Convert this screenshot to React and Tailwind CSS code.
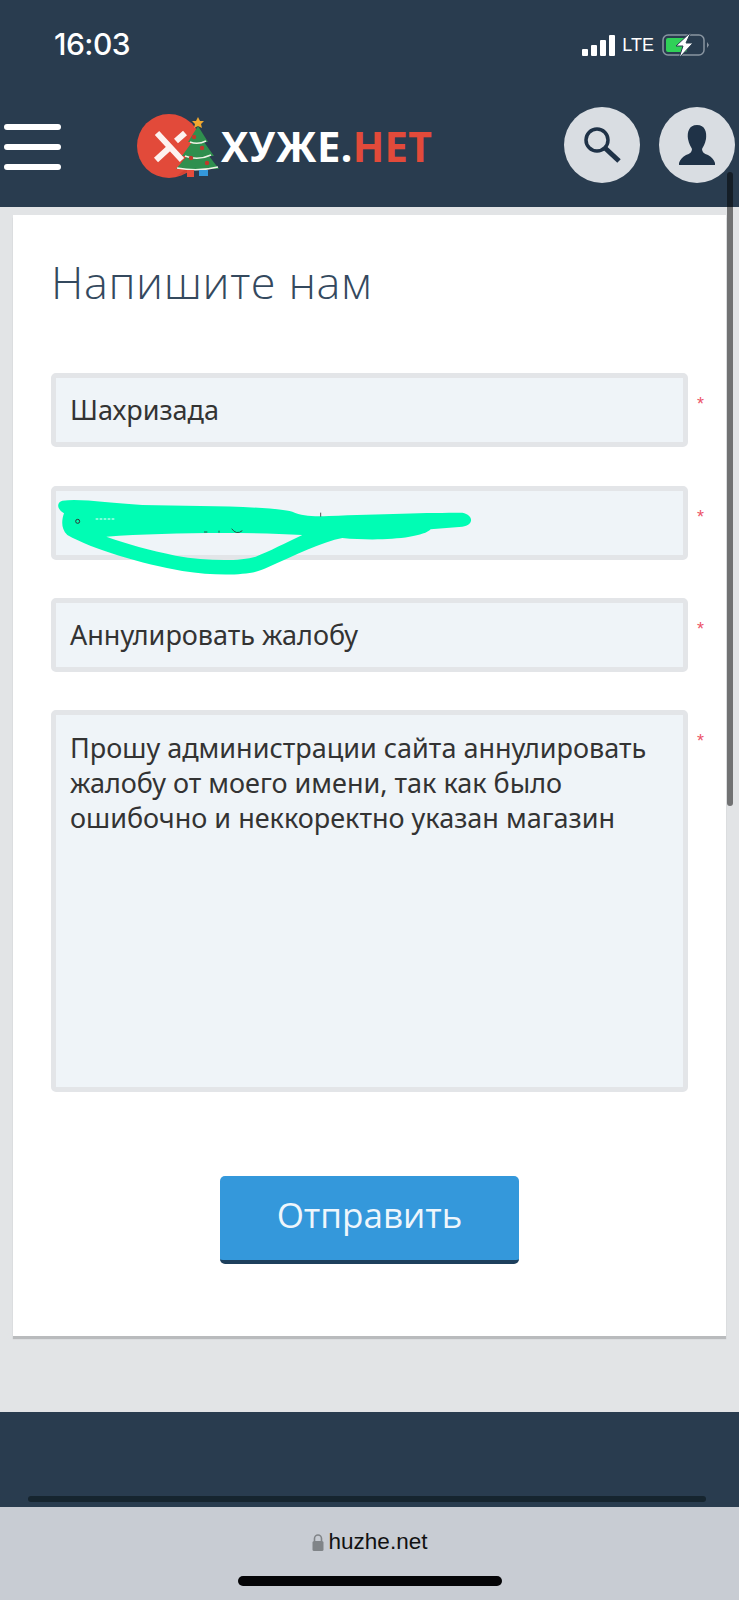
import React from 'react';

const fieldClass =
  'w-[637px] rounded-[5px] border-[5px] border-[#e3e5e8] bg-[#eff4f8] px-[14px] text-[27px] text-[#333] font-["Noto_Sans",sans-serif]';

function Required({ children, className = '' }) {
  return (
    <div className={`flex items-start ${className}`}>
      {children}
      <span className='ml-[9px] mt-[19px] text-[18px] leading-[24px] text-[#ec5468] font-["Liberation_Sans",sans-serif]'>*</span>
    </div>
  );
}

function StatusBar() {
  return (
    <div className="flex h-[88px] items-start justify-between pl-[54px] pr-[29px] pt-[26px] text-white">
      <span className='text-[30px] font-medium leading-[36px] font-["Inter",sans-serif] tracking-[-0.5px]'>16:03</span>
      <div className="flex items-center pt-[6px]">
        <svg width="33" height="21" viewBox="0 0 33 21" fill="#fff">
          <rect x="0" y="14" width="6" height="7" rx="1" />
          <rect x="9" y="10" width="6" height="11" rx="1" />
          <rect x="18" y="5" width="6" height="16" rx="1" />
          <rect x="27" y="0" width="6" height="21" rx="1" />
        </svg>
        <span className='ml-[7px] text-[18px] leading-[24px] font-["Liberation_Sans",sans-serif]'>LTE</span>
        <svg width="48" height="26" viewBox="0 0 48 26" className="ml-[8px]">
          <rect x="1" y="3" width="41" height="20" rx="5" fill="none" stroke="#8995a1" strokeWidth="1.5" />
          <rect x="4" y="6" width="21" height="14" rx="2" fill="#30d158" />
          <path d="M45 10 L47 13 L45 16 Z" fill="#8995a1" />
          <path d="M29 0 L14 14 L21 14 L17 26 L31 11 L24 11 Z" fill="#fff" stroke="#293c4f" strokeWidth="1" />
        </svg>
      </div>
    </div>
  );
}

function Logo() {
  return (
    <div className="flex items-center">
      <svg width="84" height="64" viewBox="0 0 84 64" className="shrink-0">
        <circle cx="32" cy="32" r="32" fill="#e24a3a" />
        <path d="M36 40 L50 54 L40 62 A32 32 0 0 0 60 48 Z" fill="#c9402f" opacity="0.6" />
        <path d="M20 19 L45 46 M19 46 L31 35 M39 27 L48 19" stroke="#fdf2f0" strokeWidth="6" fill="none" />
        <path d="M61 12 L51 28 L55 28 L45 42 L50 42 L39 55 L82 55 L72 42 L77 42 L67 28 L71 28 Z" fill="#2f8f4e" />
        <path d="M48 42 Q61 47 74 41 M53 28 Q61 31 69 27 M40 54 Q61 58 81 53" stroke="#eef3e6" strokeWidth="1.6" fill="none" />
        <path d="M61 3 L63 7 L67 7 L64 10 L65 14 L61 12 L57 14 L58 10 L55 7 L59 7 Z" fill="#f0a830" />
        <circle cx="54" cy="44" r="2.2" fill="#c0392b" />
        <circle cx="65" cy="34" r="2.2" fill="#c0392b" />
        <circle cx="57" cy="23" r="2.2" fill="#c0392b" />
        <circle cx="70" cy="49" r="2.2" fill="#c0392b" />
        <rect x="50" y="56" width="7" height="7" fill="#e74c3c" />
        <rect x="62" y="56" width="9" height="6" fill="#3498db" />
      </svg>
      <span className='text-[41px] font-bold leading-none tracking-[0.5px] text-white font-["Noto_Sans",sans-serif]'>
        ХУЖЕ.<span className="text-[#e24a3a]">НЕТ</span>
      </span>
    </div>
  );
}

function RoundButton({ children }) {
  return (
    <div className="flex h-[76px] w-[76px] items-center justify-center rounded-full bg-[#d9dde2]">{children}</div>
  );
}

function NavBar() {
  return (
    <div className="flex h-[119px] items-start pt-[19px]">
      <div className="ml-[4px] mt-[17px] flex w-[57px] flex-col gap-[14px]">
        <div className="h-[6px] rounded-full bg-white" />
        <div className="h-[6px] rounded-full bg-white" />
        <div className="h-[6px] rounded-full bg-white" />
      </div>
      <div className="ml-[76px] mt-[7px]">
        <Logo />
      </div>
      <div className="ml-auto mr-[4px] flex gap-[19px]">
        <RoundButton>
          <svg width="40" height="40" viewBox="0 0 40 40" fill="none" stroke="#1f3247">
            <circle cx="15" cy="15" r="11" strokeWidth="3.5" />
            <path d="M23 23 L37 36" strokeWidth="5" />
          </svg>
        </RoundButton>
        <RoundButton>
          <svg width="36" height="40" viewBox="0 0 36 40" fill="#1f3247">
            <path d="M18 0 C26 0 28 7 27 14 C26 19 24 22 23 24 C23 27 25 29 29 30 C33 32 35 35 36 38 L36 40 L0 40 L0 38 C1 35 3 32 7 30 C11 29 13 27 13 24 C12 22 10 19 9 14 C8 7 10 0 18 0 Z" />
          </svg>
        </RoundButton>
      </div>
    </div>
  );
}

function Scribble() {
  return (
    <svg width="480" height="120" viewBox="0 0 1440 360" className="pointer-events-none absolute left-[-27px] top-[-21px]">
      <path
        fillRule="evenodd"
        fill="#00fdb4"
        d="M100 92 C160 85 240 100 340 105 C500 108 720 108 790 125 C820 138 850 140 900 138 C1050 132 1200 128 1300 128 C1335 135 1335 165 1300 170 L1205 178 C1180 205 1050 215 940 204 C880 215 800 255 710 295 C670 316 570 320 460 303 C340 282 190 238 115 195 C95 175 98 150 105 130 C80 115 85 95 100 92 Z M232 200 C400 188 650 185 820 195 C770 218 720 245 680 260 C630 275 530 273 440 257 C360 240 295 222 232 200 Z"
      />
      <circle cx="146" cy="154" r="6" fill="none" stroke="#333" strokeWidth="3" />
      <path d="M200 147 H258" stroke="#fff" strokeWidth="3" strokeDasharray="8 4" />
      <path d="M875 128 V140 M608 176 Q622 196 640 182 M525 186 H535 M570 182 V188" stroke="#333" strokeWidth="2.5" fill="none" />
    </svg>
  );
}

export default function App() {
  return (
    <div className='relative h-[1600px] w-[739px] overflow-hidden bg-[#e2e4e6] font-["Noto_Sans",sans-serif]'>
      <header className="h-[207px] bg-[#293c4f]">
        <StatusBar />
        <NavBar />
      </header>

      <main className="h-[1205px] pl-[13px] pr-[13px] pt-[8px]">
        <div className="h-[1121px] bg-white pl-[38px] pt-[37px] shadow-[0_3px_1px_#b9bbbd]">
          <h1 className='text-[45px] font-light leading-[60px] tracking-[0.6px] text-[#34495e] font-["Open_Sans",sans-serif]'>Напишите нам</h1>

          <Required className="mt-[61px]">
            <div className={`${fieldClass} flex h-[74px] items-center`}>Шахризада</div>
          </Required>
          <Required className="mt-[39px]">
            <div className={`${fieldClass} relative h-[74px]`}>
              <Scribble />
            </div>
          </Required>
          <Required className="mt-[38px]">
            <div className={`${fieldClass} flex h-[74px] items-center`}>Аннулировать жалобу</div>
          </Required>
          <Required className="mt-[38px]">
            <div className={`${fieldClass} h-[382px] pt-[15px] leading-[35px]`}>
              Прошу администрации сайта аннулировать жалобу от моего имени, так как было ошибочно и неккоректно указан магазин
            </div>
          </Required>

          <button className='mt-[84px] ml-[169px] block h-[88px] w-[299px] rounded-[5px] border-b-[4px] border-[#1d3f5c] bg-[#3498db] pb-[6px] text-[35px] text-[#eef6fc] font-["Open_Sans",sans-serif]'>
            Отправить
          </button>
        </div>
      </main>

      <footer className="flex h-[95px] items-end bg-[#293c4f] pb-[5px] pl-[28px] pr-[33px]">
        <div className="h-[6px] w-full rounded-full bg-[#16252f]" />
      </footer>

      <div className="flex h-[93px] flex-col items-center bg-[#c8ccd3] pt-[23px]">
        <div className="flex items-center gap-[5px]">
          <svg width="12" height="17" viewBox="0 0 12 17" fill="#808488">
            <path d="M2.5 7 V4.5 a3.5 3.5 0 0 1 7 0 V7" fill="none" stroke="#808488" strokeWidth="1.6" />
            <rect x="0.5" y="7" width="11" height="10" rx="1.5" />
          </svg>
          <span className='text-[22.5px] leading-[24px] text-[#111] font-["Liberation_Sans",sans-serif]'>huzhe.net</span>
        </div>
        <div className="mt-[22px] h-[10px] w-[264px] rounded-full bg-[#050507]" />
      </div>

      {/* скроллбар страницы поверх контента */}
      <div className="absolute left-[727px] top-[172px] h-[634px] w-[6px] rounded-full bg-black/50" />
    </div>
  );
}
